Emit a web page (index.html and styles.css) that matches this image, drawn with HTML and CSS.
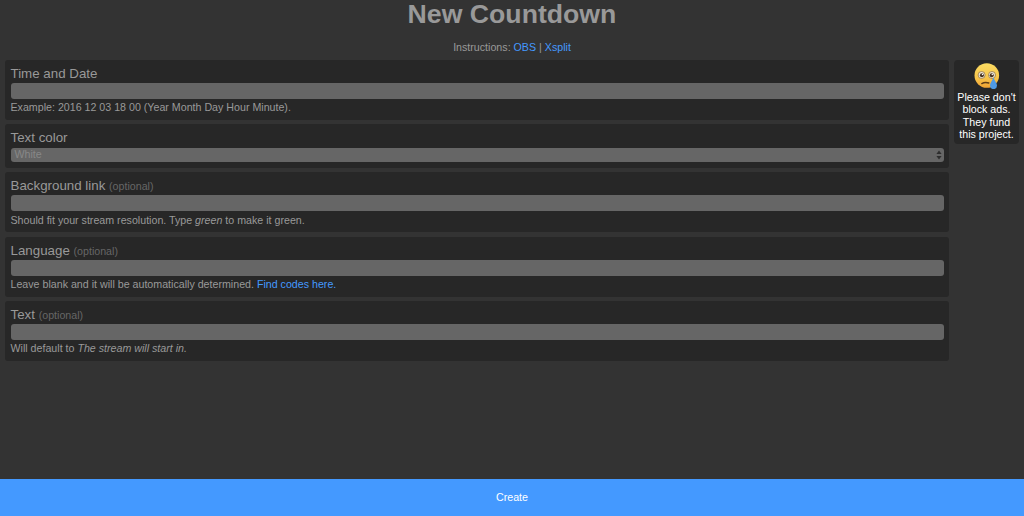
FILE: index.html
```html
<!DOCTYPE html>
<html lang="en">
<head>
<meta charset="utf-8">
<title>New Countdown</title>
<link rel="stylesheet" href="styles.css">
</head>
<body>
<main class="page">
  <h1 class="title">New Countdown</h1>
  <p class="instructions">Instructions: <a href="#">OBS</a> | <a href="#">Xsplit</a></p>
  <div class="columns">
    <form class="fields">
      <div class="panel">
        <label class="label">Time and Date</label>
        <input class="input" type="text">
        <p class="help">Example: 2016 12 03 18 00 (Year Month Day Hour Minute).</p>
      </div>
      <div class="panel panel-select">
        <label class="label">Text color</label>
        <div class="select">
          <span class="select-value">White</span>
          <svg class="arrows" width="6" height="10" viewBox="0 0 6 10"><path d="M3 0.5 5.6 4H.4zM3 9.5 .4 6h5.2z"/></svg>
        </div>
      </div>
      <div class="panel">
        <label class="label">Background link <small>(optional)</small></label>
        <input class="input" type="text">
        <p class="help">Should fit your stream resolution. Type <em>green</em> to make it green.</p>
      </div>
      <div class="panel">
        <label class="label">Language <small>(optional)</small></label>
        <input class="input" type="text">
        <p class="help">Leave blank and it will be automatically determined. <a href="#">Find codes here.</a></p>
      </div>
      <div class="panel">
        <label class="label">Text <small>(optional)</small></label>
        <input class="input" type="text">
        <p class="help">Will default to <em>The stream will start in.</em></p>
      </div>
    </form>
    <aside class="ad-note">
      <svg class="emoji" width="26" height="26" viewBox="0 0 26 26">
        <defs><linearGradient id="face" x1="0" y1="0" x2="0" y2="1"><stop offset="0" stop-color="#fbdc62"/><stop offset=".6" stop-color="#f8c54a"/><stop offset="1" stop-color="#f0a233"/></linearGradient></defs>
        <circle cx="12.8" cy="12.5" r="12.3" fill="url(#face)"/>
        <circle cx="7.6" cy="12" r="3.5" fill="#efe6d2" stroke="#8a6a3a" stroke-width=".7"/>
        <circle cx="18" cy="12" r="3.5" fill="#efe6d2" stroke="#8a6a3a" stroke-width=".7"/>
        <circle cx="7.9" cy="12.2" r="2" fill="#4a3420"/>
        <circle cx="17.7" cy="12.2" r="2" fill="#4a3420"/>
        <circle cx="8.5" cy="11.5" r=".7" fill="#fff"/>
        <circle cx="18.3" cy="11.5" r=".7" fill="#fff"/>
        <path d="M7.8 20.6Q11 18.6 14.8 20" fill="none" stroke="#5e3c18" stroke-width="1.4" stroke-linecap="round"/>
        <path d="M19.4 14.5C18 18 16 20 16 22.6A3.5 3.5 0 0 0 23 22.6C23 20 20.8 18 19.4 14.5Z" fill="#4f9ae4"/>
      </svg>
      <p class="ad-text">Please don't block ads. They fund this project.</p>
    </aside>
  </div>
</main>
<button class="create" type="button">Create</button>
</body>
</html>
```
FILE: styles.css
```css
* { box-sizing: border-box; }
html, body { height: 100%; margin: 0; }
body {
  display: flex;
  flex-direction: column;
  background: #333;
  color: #999;
  font-family: "Liberation Sans", Arial, sans-serif;
  font-size: 10.67px;
  overflow: hidden;
}
a { color: #4499ff; text-decoration: none; }
.page { flex: 1; padding: 0 5px; min-height: 0; }
.title {
  margin: 0;
  height: 30px;
  font-size: 26.67px;
  line-height: 28px;
  font-weight: 700;
  text-align: center;
  color: #999;
}
.instructions {
  margin: 11px 0 0;
  height: 19px;
  line-height: 13px;
  text-align: center;
  color: #999;
}
.columns { display: flex; gap: 5px; align-items: flex-start; }
.fields { flex: 1; min-width: 0; display: flex; flex-direction: column; gap: 4.2px; }
.panel {
  background: #272727;
  border-radius: 3px;
  padding: 5px 5px 5px 5.5px;
  height: 60px;
}
.panel-select { height: 44px; }
.label {
  display: block;
  height: 18px;
  font-size: 13.33px;
  line-height: 17px;
  color: #999;
}
.panel-select .label { height: 19px; }
.label small { font-size: 10.67px; color: #666; }
.input {
  display: block;
  width: 100%;
  height: 16px;
  border: 0;
  padding: 0;
  border-radius: 3px;
  background: #666;
}
.select {
  display: flex;
  align-items: center;
  justify-content: space-between;
  height: 14px;
  padding: 0 2px 0 4px;
  border-radius: 3px;
  background: #666;
  color: #888;
  font-size: 10.67px;
}
.select-value { margin-bottom: 2px; }
.arrows { fill: #2e2e2e; }
.help { margin: 2.4px 0 0; line-height: 13px; color: #999; white-space: nowrap; }
.ad-note {
  flex: none;
  width: 65px;
  height: 84px;
  padding: 3px 0 0;
  background: #272727;
  border-radius: 4px;
  text-align: center;
}
.emoji { display: block; margin: 0 auto; }
.ad-text { margin: 2px 0 0; color: #fff; font-size: 10.67px; line-height: 12.3px; }
.create {
  flex: none;
  display: block;
  width: 100%;
  height: 37px;
  border: 0;
  padding: 0 0 2px;
  background: #4499ff;
  color: #fff;
  font: 10.67px "Liberation Sans", Arial, sans-serif;
}
```
